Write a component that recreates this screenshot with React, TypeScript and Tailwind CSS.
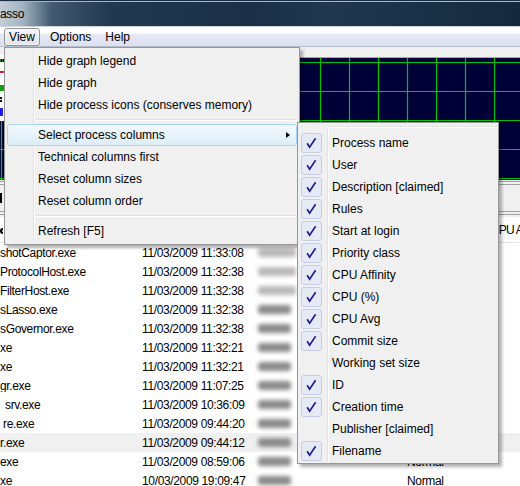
import React from "react";

type Row = { name: string; pad: number; time: string; light?: boolean; sel?: boolean; prio?: boolean };

const rows: Row[] = [
  { name: "shotCaptor.exe", pad: 0, time: "11/03/2009 11:33:08", light: true },
  { name: "ProtocolHost.exe", pad: 0, time: "11/03/2009 11:32:38", light: true },
  { name: "FilterHost.exe", pad: 0, time: "11/03/2009 11:32:38", light: true },
  { name: "sLasso.exe", pad: 0, time: "11/03/2009 11:32:38" },
  { name: "sGovernor.exe", pad: 0, time: "11/03/2009 11:32:38" },
  { name: "xe", pad: 0, time: "11/03/2009 11:32:21" },
  { name: "xe", pad: 0, time: "11/03/2009 11:32:21" },
  { name: "gr.exe", pad: 0, time: "11/03/2009 11:07:25" },
  { name: "srv.exe", pad: 5, time: "11/03/2009 10:36:09" },
  { name: "re.exe", pad: 3, time: "11/03/2009 09:44:20" },
  { name: "r.exe", pad: 0, time: "11/03/2009 09:44:12", sel: true },
  { name: "exe", pad: 0, time: "11/03/2009 08:59:06", prio: true },
  { name: "xe", pad: 0, time: "10/03/2009 19:09:47", prio: true },
];

type MenuEntry = { label: string; active?: boolean; sub?: boolean } | "sep";

const viewItems: MenuEntry[] = [
  { label: "Hide graph legend" },
  { label: "Hide graph" },
  { label: "Hide process icons (conserves memory)" },
  "sep",
  { label: "Select process columns", active: true, sub: true },
  { label: "Technical columns first" },
  { label: "Reset column sizes" },
  { label: "Reset column order" },
  "sep",
  { label: "Refresh [F5]" },
];

const columns: { label: string; on: boolean }[] = [
  { label: "Process name", on: true },
  { label: "User", on: true },
  { label: "Description [claimed]", on: true },
  { label: "Rules", on: true },
  { label: "Start at login", on: true },
  { label: "Priority class", on: true },
  { label: "CPU Affinity", on: true },
  { label: "CPU (%)", on: true },
  { label: "CPU Avg", on: true },
  { label: "Commit size", on: true },
  { label: "Working set size", on: false },
  { label: "ID", on: true },
  { label: "Creation time", on: true },
  { label: "Publisher [claimed]", on: false },
  { label: "Filename", on: true },
];

function Graph() {
  const hs = [4, 33, 62, 91, 120];
  const vs = Array.from({ length: 18 }, (_, i) => 1.5 + i * 29);
  return (
    <svg width="520" height="122" className="block">
      <rect width="520" height="122" fill="#000038" />
      {hs.map((y) => (
        <line key={y} x1="0" x2="520" y1={y + 0.5} y2={y + 0.5} stroke="#00c400" strokeWidth="1.2" />
      ))}
      {vs.map((x) => (
        <line key={x} x1={x} x2={x} y1="0" y2="122" stroke="#00c400" strokeWidth="1.2" />
      ))}
    </svg>
  );
}

function CheckBox() {
  return (
    <div className="w-[21px] h-[20px] rounded-[3px] border border-[#c5cce5] bg-[#e6eaf7] flex items-center justify-center">
      <svg width="19" height="18" viewBox="0 0 19 18">
        <path d="M5.2 9.2 L7.6 13.2 L13.6 4.2" fill="none" stroke="#1f1f8f" strokeWidth="1.7" />
      </svg>
    </div>
  );
}

function ViewMenu() {
  return (
    <div className="absolute left-[4px] top-[47px] w-[296px] border border-[#979797] bg-[#f0f0f0] p-[2px] shadow-[3px_3px_3px_rgba(0,0,0,0.3)]">
      <div className="absolute left-[28px] top-[2px] bottom-[2px] w-[2px] border-l border-[#e2e3e3] border-r border-r-white" />
      {viewItems.map((it, i) =>
        it === "sep" ? (
          <div key={i} className="h-[8px] flex items-center pl-[28px] pr-[1px]">
            <div className="flex-1 h-[2px] border-t border-[#e0e0e0] border-b border-b-white" />
          </div>
        ) : it.active ? (
          <div
            key={i}
            className="relative h-[22px] flex items-center pl-[30px] rounded-[3px] border border-[#a9d8ec] bg-gradient-to-b from-[#f3f9fd] to-[#dcedf8]"
          >
            <span>{it.label}</span>
            <div className="absolute right-[6px] top-[7px] w-0 h-0 border-y-[3.5px] border-y-transparent border-l-[4px] border-l-black" />
          </div>
        ) : (
          <div key={i} className="h-[22px] flex items-center pl-[31px]">
            {it.label}
          </div>
        )
      )}
    </div>
  );
}

function ColumnsMenu() {
  return (
    <div className="absolute left-[297px] top-[122px] w-[202px] border border-[#979797] bg-[#f0f0f0] px-[2px] pt-[9px] pb-[1px] shadow-[3px_3px_3px_rgba(0,0,0,0.3)]">
      <div className="absolute left-[29px] top-[3px] right-[1px] h-[2px] border-t border-[#e2e3e3] border-b border-b-white" />
      <div className="absolute left-[29px] top-[5px] bottom-[1px] w-[2px] border-l border-[#e2e3e3] border-r border-r-white" />
      {columns.map((c) => (
        <div key={c.label} className="relative h-[22px] flex items-center">
          <div className="w-[21px] ml-[1px]">{c.on && <CheckBox />}</div>
          <span className="ml-[10px]">{c.label}</span>
        </div>
      ))}
    </div>
  );
}

export default function App() {
  return (
    <div className="relative w-[520px] h-[486px] overflow-hidden bg-white text-black text-[12px] leading-none [font-family:'Liberation_Sans',Arial,sans-serif]">
      {/* Title bar */}
      <div className="h-[27px] bg-[#1a2d42] pt-[1px]">
        <div className="h-[26px] border-t border-[#aab6c2] border-b border-b-[#cbd3db] bg-[linear-gradient(90deg,#c2ccd6_0px,#a6b5c3_22px,#415a70_52px,#22394f_110px,#1b3047_250px,#203850_330px,#15293d_520px)] flex items-center">
          <span className="text-[12px] tracking-[-0.3px] text-black">asso</span>
        </div>
      </div>

      {/* Menu bar */}
      <div className="h-[20px] flex items-center border-b border-[#b7bccb] bg-[linear-gradient(180deg,#ffffff_0%,#ffffff_32%,#e6e9f5_38%,#dbe0f1_100%)]">
        <div className="ml-[4px] h-[18px] w-[36px] flex items-center justify-center rounded-[3px] border border-[#8e9091] bg-gradient-to-b from-[#f4f5f7] to-[#dfe3ec] shadow-[inset_0_0_0_1px_rgba(255,255,255,0.6)]">
          View
        </div>
        <span className="ml-[10px]">Options</span>
        <span className="ml-[14px]">Help</span>
      </div>

      <div className="h-[11px] bg-[#f0f0f0] border-b border-[#a9a9a9]" />

      {/* Graph with legend */}
      <div className="relative h-[121px]">
        <Graph />
        <div className="absolute left-0 top-[-3px] w-[40px] h-[66px] bg-white">
          <div className="ml-0 mt-[4px] w-[4px] h-[3px] bg-[repeating-linear-gradient(90deg,#0a8a0a_0px,#0a8a0a_1px,#000_1px,#000_2px)]" />
          <div className="mt-[9px] w-[4px] h-[2px] bg-[#e02020]" />
          <div className="mt-[12px] w-[4px] h-[6px] bg-[#10a010]" />
          <div className="mt-[6px] w-[2px] h-[5px] border-y-2 border-black" />
          <div className="mt-[6px] w-[3px] h-[8px] bg-[#2020e0]" />
        </div>
      </div>

      {/* Toolbar band */}
      <div className="h-[38px] bg-[#f0f0f0] pt-[2px]">
        <div className="h-[4px] border-y border-[#a0a0a0]" />
        <div className="h-[26px] flex items-center">
          <div className="w-[2px] h-[10px] bg-black" />
        </div>
        <div className="h-[4px] border-y border-[#a0a0a0]" />
      </div>

      {/* Header row */}
      <div className="relative h-[26px] flex items-center border-b border-[#e5e5e5]">
        <div className="w-[3px] h-[6px] mt-[3px] rounded-l-full border-2 border-r-0 border-black" />
        <span className="absolute left-[491px] whitespace-nowrap tracking-[-0.8px]">CPU Affinity</span>
      </div>

      {/* Process rows */}
      <div className="tracking-[-0.35px]">
        {rows.map((r, i) => (
          <div key={i} className={`h-[19px] flex items-center ${r.sel ? "bg-[#f0f0f0]" : ""}`}>
            <div className="w-[142px] overflow-hidden whitespace-nowrap" style={{ paddingLeft: r.pad }}>
              {r.name}
            </div>
            <div className="w-[116px] whitespace-nowrap">{r.time}</div>
            <div className="w-[149px]">
              <div
                className={`h-[9px] rounded-[3px] blur-[2px] ${r.light ? "w-[38px] bg-[#b8b8b8]" : "w-[33px] bg-[#8a8a8a]"}`}
              />
            </div>
            {r.prio && <div>Normal</div>}
          </div>
        ))}
      </div>

      <ViewMenu />
      <ColumnsMenu />
    </div>
  );
}
